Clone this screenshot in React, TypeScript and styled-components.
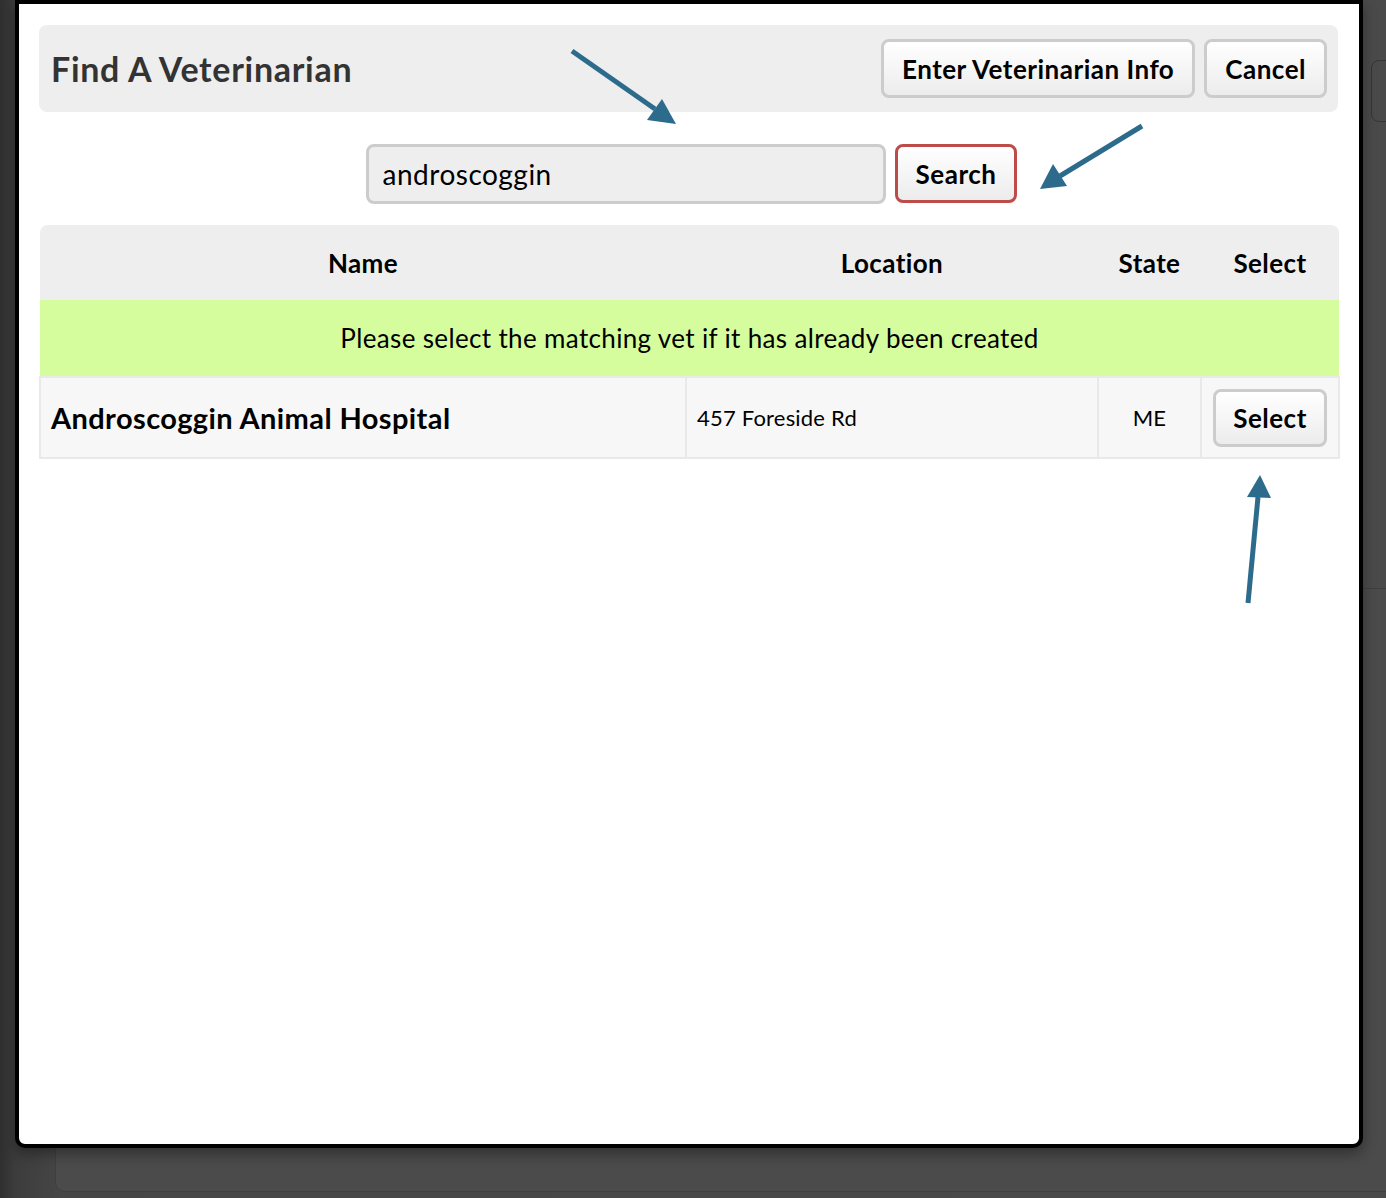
import React from 'react';
import styled, { createGlobalStyle } from 'styled-components';

const GlobalStyle = createGlobalStyle`
  html, body {
    margin: 0;
    padding: 0;
    height: 100%;
  }
  body {
    background: linear-gradient(90deg, #2f2f2f 0px, #3c3c3c 15px, #464646 60px, #4a4a4a 100%);
    font-family: 'Lato', 'Noto Sans', sans-serif;
    color: #000;
    overflow: hidden;
  }
`;

interface VetResult {
  name: string;
  location: string;
  state: string;
}

const results: VetResult[] = [
  { name: 'Androscoggin Animal Hospital', location: '457 Foreside Rd', state: 'ME' },
];

const Backdrop = styled.div`
  position: relative;
  width: 1386px;
  height: 1198px;
`;

const PagePanel = styled.div`
  position: absolute;
  left: 55px;
  right: -20px;
  top: 588px;
  bottom: 6px;
  border: 1px solid #3f3f3f;
  border-radius: 10px;
  background: #4b4b4b;
`;

const SideButton = styled.div`
  position: absolute;
  left: 1371px;
  top: 60px;
  width: 40px;
  height: 60px;
  border: 1px solid #353535;
  border-radius: 8px;
`;

const Modal = styled.div`
  position: relative;
  margin-left: 15px;
  width: 1348px;
  height: 1148px;
  box-sizing: border-box;
  border: 4px solid #000;
  border-radius: 0 0 10px 10px;
  background: #fff;
  padding: 21px 21px 0 20px;
  box-shadow: 0 6px 14px rgba(0, 0, 0, 0.35);
`;

const Toolbar = styled.div`
  display: flex;
  align-items: center;
  justify-content: space-between;
  height: 87px;
  padding: 0 11px 0 12px;
  border-radius: 8px;
  background: #eeeeee;
`;

const Title = styled.h2`
  margin: 0;
  font-size: 34px;
  font-weight: 700;
  color: #333;
  letter-spacing: 0.7px;
`;

const ButtonGroup = styled.div`
  display: flex;
  gap: 9px;
`;

const Button = styled.button<{ $accent?: boolean }>`
  height: 59px;
  padding: 0 18px;
  border: 3px solid ${({ $accent }) => ($accent ? '#bd4b49' : '#cccccc')};
  border-radius: 8px;
  background: linear-gradient(#ffffff, #ececec);
  font-family: inherit;
  font-size: 26px;
  font-weight: 700;
  letter-spacing: 0.5px;
  color: #000;
  cursor: pointer;
`;

const SearchRow = styled.div`
  display: flex;
  justify-content: center;
  gap: 9px;
  margin: 32px 0 21px;
  padding-left: 6px;
`;

const SearchInput = styled.input`
  width: 520px;
  height: 60px;
  box-sizing: border-box;
  padding: 0 14px;
  border: 3px solid #cccccc;
  border-radius: 8px;
  background: #eeeeee;
  font-family: inherit;
  font-size: 28px;
  letter-spacing: 0.5px;
  color: #000;
  outline: none;
`;

const Table = styled.table`
  width: 1299px;
  border-collapse: collapse;
  table-layout: fixed;
`;

const HeadCell = styled.th<{ $width: number }>`
  width: ${({ $width }) => $width}px;
  height: 75px;
  padding: 0;
  background: #eeeeee;
  font-size: 26px;
  font-weight: 700;
  letter-spacing: 0.4px;
  text-align: center;

  &:first-child {
    border-top-left-radius: 8px;
  }
  &:last-child {
    border-top-right-radius: 8px;
  }
`;

const NoticeCell = styled.td`
  height: 76px;
  padding: 0;
  background: #d6fd9d;
  font-size: 26px;
  letter-spacing: 0.35px;
  text-align: center;
`;

const Cell = styled.td<{ $align?: 'left' | 'center'; $strong?: boolean }>`
  height: 79px;
  padding: 0 10px;
  border: 2px solid #e9e9e9;
  background: #f7f7f7;
  text-align: ${({ $align }) => $align ?? 'left'};
  font-size: ${({ $strong }) => ($strong ? 29 : 22)}px;
  font-weight: ${({ $strong }) => ($strong ? 700 : 400)};
  letter-spacing: ${({ $strong }) => ($strong ? 0.4 : 0.2)}px;
`;

const SelectButton = styled(Button)`
  height: 58px;
  width: 114px;
  padding: 0;
`;

const ArrowLayer = styled.svg`
  position: absolute;
  left: 0;
  top: 0;
  pointer-events: none;
`;

// Hint arrows drawn over the dialog
const Arrows: React.FC = () => (
  <ArrowLayer width={1386} height={1198} viewBox="0 0 1386 1198">
    <g stroke="#2d6b8c" strokeWidth={5} strokeLinecap="butt" fill="#2d6b8c">
      <line x1={572} y1={51} x2={655} y2={109} />
      <polygon points="676,124 647,120 662,99" stroke="none" />
      <line x1={1142} y1={126} x2={1060} y2={176} />
      <polygon points="1040,189 1053,164 1067,186" stroke="none" />
      <line x1={1248} y1={603} x2={1258} y2={497} />
      <polygon points="1260,475 1271,498 1247,497" stroke="none" />
    </g>
  </ArrowLayer>
);

const App: React.FC = () => (
  <>
    <GlobalStyle />
    <Backdrop>
      <PagePanel />
      <SideButton />
      <Modal>
        <Toolbar>
          <Title>Find A Veterinarian</Title>
          <ButtonGroup>
            <Button>Enter Veterinarian Info</Button>
            <Button>Cancel</Button>
          </ButtonGroup>
        </Toolbar>

        <SearchRow>
          <SearchInput defaultValue="androscoggin" />
          <Button $accent>Search</Button>
        </SearchRow>

        <Table>
          <thead>
            <tr>
              <HeadCell $width={646}>Name</HeadCell>
              <HeadCell $width={412}>Location</HeadCell>
              <HeadCell $width={103}>State</HeadCell>
              <HeadCell $width={138}>Select</HeadCell>
            </tr>
          </thead>
          <tbody>
            <tr>
              <NoticeCell colSpan={4}>
                Please select the matching vet if it has already been created
              </NoticeCell>
            </tr>
            {results.map((vet) => (
              <tr key={vet.name}>
                <Cell $strong>{vet.name}</Cell>
                <Cell>{vet.location}</Cell>
                <Cell $align="center">{vet.state}</Cell>
                <Cell $align="center">
                  <SelectButton>Select</SelectButton>
                </Cell>
              </tr>
            ))}
          </tbody>
        </Table>
      </Modal>
      <Arrows />
    </Backdrop>
  </>
);

export default App;
